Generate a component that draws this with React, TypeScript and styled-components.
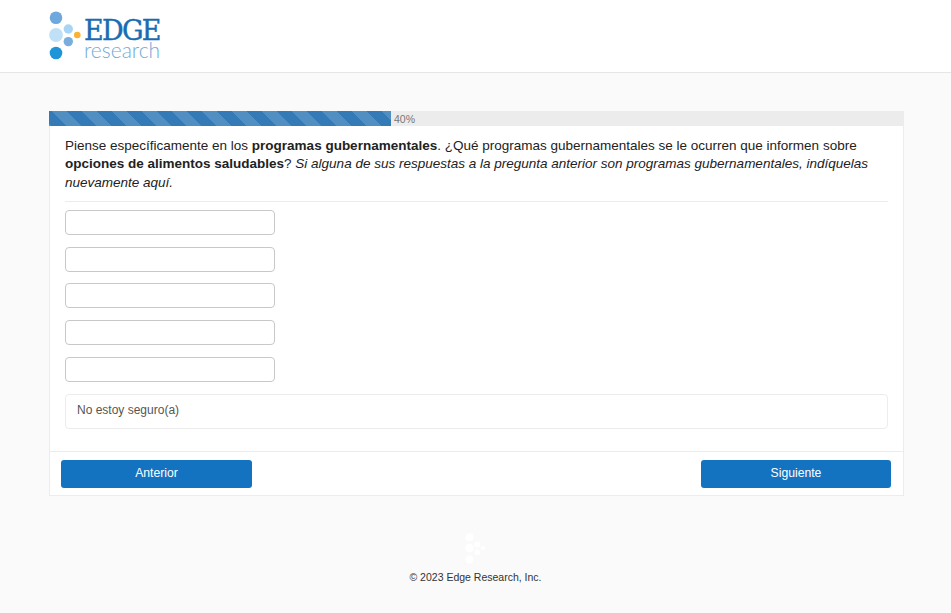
import React from "react";
import styled, { createGlobalStyle } from "styled-components";

const Global = createGlobalStyle`
  html, body { margin: 0; padding: 0; background: #fafafa; }
  body { font-family: "Liberation Sans", Arial, sans-serif; color: #222; }
`;

const Page = styled.div`
  width: 951px;
  height: 613px;
  overflow: hidden;
  display: flex;
  flex-direction: column;
  background: #fafafa;
`;
const Header = styled.header`
  background: #fff;
  border-bottom: 1px solid #e6e6e6;
  padding: 11px 0 0 49px;
  height: 61px;
  display: flex;
  align-items: flex-start;
  gap: 2px;
`;
const LogoWords = styled.div`
  display: flex;
  flex-direction: column;
  margin-top: 6px;
`;
const LogoEdge = styled.div`
  font-family: "DejaVu Serif", "Liberation Serif", serif;
  font-size: 27px;
  line-height: 27px;
  letter-spacing: -1.7px;
  color: #1a6cb2;
  height: 25px;
  -webkit-text-stroke: 0.4px #1a6cb2;
`;
const LogoResearch = styled.div`
  font-family: Lato, "Liberation Sans", sans-serif;
  font-weight: 300;
  font-size: 21px;
  line-height: 15px;
  color: #74a9d8;
`;
const Main = styled.main`
  margin: 38px 47px 0 49px;
  background: #fff;
  border: 1px solid #ececec;
  border-top: 0;
  display: flex;
  flex-direction: column;
`;
const Track = styled.div`
  height: 15px;
  margin: 0 -1px;
  background: #ececec;
  display: flex;
  align-items: center;
`;
const Fill = styled.div`
  height: 100%;
  background-color: #337ab7;
  background-image: linear-gradient(45deg, rgba(255,255,255,.15) 25%, transparent 25%, transparent 50%, rgba(255,255,255,.15) 50%, rgba(255,255,255,.15) 75%, transparent 75%, transparent);
  background-size: 30px 30px;
  background-position: 3px 0;
`;
const TrackLabel = styled.span`
  font-size: 10.5px;
  color: #777;
  margin-left: 3px;
`;
const Body = styled.div`
  padding: 11px 15px 22px 15px;
  border-bottom: 1px solid #ececec;
`;
const Question = styled.div`
  font-size: 13.5px;
  line-height: 18.4px;
  color: #222;
  padding-bottom: 9px;
  border-bottom: 1px solid #ececec;
  b { font-weight: 700; }
  i { font-style: italic; }
`;
const Inputs = styled.div`
  display: flex;
  flex-direction: column;
  gap: 11.8px;
  margin-top: 7.5px;
`;
const TextInput = styled.input`
  width: 210px;
  height: 25px;
  box-sizing: border-box;
  background: #fff;
  border: 1px solid #c8c8c8;
  border-radius: 4px;
  padding: 0 8px;
  outline: none;
  display: block;
`;
const Unsure = styled.div`
  margin-top: 12px;
  height: 35px;
  box-sizing: border-box;
  border: 1px solid #ececec;
  border-radius: 4px;
  padding: 0 11px 2px;
  display: flex;
  align-items: center;
  font-size: 12px;
  color: #555;
`;
const Footer = styled.div`
  display: flex;
  justify-content: space-between;
  padding: 8px 12px 7px 11px;
`;
const NavButton = styled.button<{ $w: number }>`
  width: ${(p) => p.$w}px;
  height: 28px;
  border: 0;
  border-radius: 3px;
  background: #1473c1;
  color: #fff;
  font-family: "Liberation Sans", Arial, sans-serif;
  font-size: 12.2px;
  padding: 0 0 2px;
`;
const Bottom = styled.footer`
  display: flex;
  flex-direction: column;
  align-items: center;
  margin-top: 37px;
`;
const Copy = styled.div`
  font-size: 10.5px;
  color: #333;
  margin-top: 7px;
`;

const LogoMark = ({ color }: { color?: boolean }) => (
  <svg width={color ? 33 : 21} height={color ? 49 : 31} viewBox="0 0 33 49">
    <circle cx="7" cy="6.7" r="6.3" fill={color ? "#6fa8dc" : "#fff"} />
    <circle cx="7" cy="24" r="6.9" fill={color ? "#c0e0f7" : "#fff"} />
    <circle cx="7" cy="42" r="6.3" fill={color ? "#1d95d8" : "#fff"} />
    <circle cx="19.3" cy="18" r="4.7" fill={color ? "#a9d5f5" : "#fff"} />
    <circle cx="19.3" cy="30.6" r="4.7" fill={color ? "#77aedd" : "#fff"} />
    <circle cx="28.3" cy="24" r="3.3" fill={color ? "#f9b233" : "#fff"} />
  </svg>
);

export default function App() {
  return (
    <Page>
      <Global />
      <Header>
        <LogoMark color />
        <LogoWords>
          <LogoEdge>EDGE</LogoEdge>
          <LogoResearch>research</LogoResearch>
        </LogoWords>
      </Header>
      <Main>
        <Track>
          <Fill style={{ width: "40%" }} />
          <TrackLabel>40%</TrackLabel>
        </Track>
        <Body>
          <Question>
            Piense específicamente en los <b>programas gubernamentales</b>. ¿Qué programas gubernamentales se le ocurren que informen sobre <b>opciones de alimentos saludables</b>? <i>Si alguna de sus respuestas a la pregunta anterior son programas gubernamentales, indíquelas nuevamente aquí.</i>
          </Question>
          <Inputs>
            {[0, 1, 2, 3, 4].map((n) => (
              <TextInput key={n} type="text" />
            ))}
          </Inputs>
          <Unsure>No estoy seguro(a)</Unsure>
        </Body>
        <Footer>
          <NavButton $w={191}>Anterior</NavButton>
          <NavButton $w={190}>Siguiente</NavButton>
        </Footer>
      </Main>
      <Bottom>
        <LogoMark />
        <Copy>© 2023 Edge Research, Inc.</Copy>
      </Bottom>
    </Page>
  );
}
